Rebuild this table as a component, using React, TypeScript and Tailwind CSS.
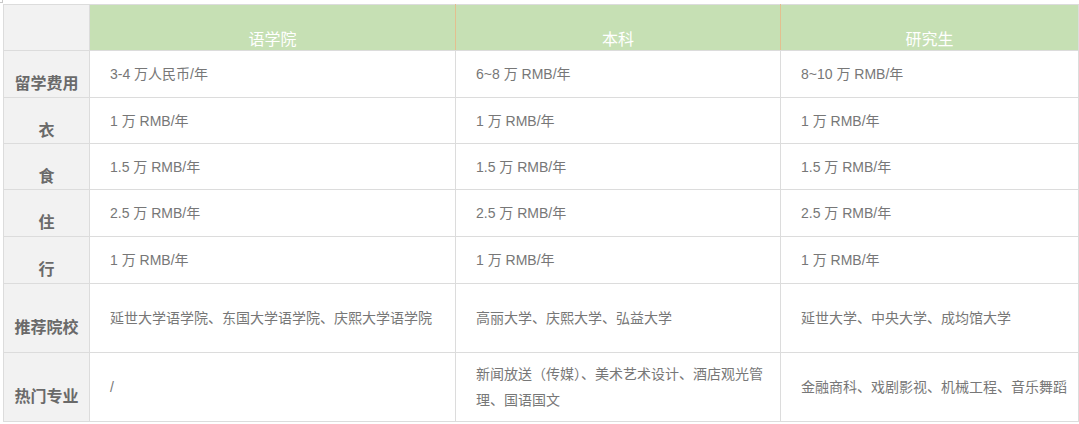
import React from 'react';

const font = { fontFamily: '"Liberation Sans", "Noto Sans CJK SC", sans-serif' };

interface Row {
  label: string;
  height: string;
  cells: React.ReactNode[];
}

const rows: Row[] = [
  { label: '留学费用', height: 'h-[47px]', cells: ['3-4 万人民币/年', '6~8 万 RMB/年', '8~10 万 RMB/年'] },
  { label: '衣', height: 'h-[46px]', cells: ['1 万 RMB/年', '1 万 RMB/年', '1 万 RMB/年'] },
  { label: '食', height: 'h-[46px]', cells: ['1.5 万 RMB/年', '1.5 万 RMB/年', '1.5 万 RMB/年'] },
  { label: '住', height: 'h-[47px]', cells: ['2.5 万 RMB/年', '2.5 万 RMB/年', '2.5 万 RMB/年'] },
  { label: '行', height: 'h-[47px]', cells: ['1 万 RMB/年', '1 万 RMB/年', '1 万 RMB/年'] },
  {
    label: '推荐院校',
    height: 'h-[69px]',
    cells: ['延世大学语学院、东国大学语学院、庆熙大学语学院', '高丽大学、庆熙大学、弘益大学', '延世大学、中央大学、成均馆大学'],
  },
  {
    label: '热门专业',
    height: 'h-[69px]',
    cells: [
      '/',
      <>
        新闻放送（传媒）、美术艺术设计、酒店观光管
        <br />
        理、国语国文
      </>,
      '金融商科、戏剧影视、机械工程、音乐舞蹈',
    ],
  },
];

const headers = ['语学院', '本科', '研究生'];

export default function App() {
  return (
    <div className="relative w-[1079px] h-[424px] bg-white overflow-hidden" style={font}>
      {/* stray corner mark */}
      <div className="absolute left-0 top-0 h-[3px] w-[3px] border-r border-b border-[#c8c8c8]" />

      <div className="pl-[3px] pt-[4px]">
        <table className="table-fixed border-collapse w-[1075px]">
          <colgroup>
            <col className="w-[86px]" />
            <col className="w-[366px]" />
            <col className="w-[325px]" />
            <col className="w-[298px]" />
          </colgroup>
          <thead>
            <tr className="h-[46px]">
              <th className="bg-[#f2f2f2] border border-[#dcdcdc]" />
              {headers.map((h, i) => (
                <th
                  key={h}
                  className={
                    'bg-[#c6e0b4] align-bottom text-center text-[16px] leading-[20px] font-normal text-white border-y border-[#dcdcdc] ' +
                    (i < 2 ? 'border-r border-r-[#e3bf8f]' : 'border-r border-r-[#dcdcdc]')
                  }
                >
                  {h}
                </th>
              ))}
            </tr>
          </thead>
          <tbody>
            {rows.map((r) => (
              <tr key={r.label} className={r.height}>
                <td className="bg-[#f2f2f2] border border-[#dcdcdc] text-center align-middle pt-[20px] text-[16px] leading-[20px] font-bold text-[#6a6a6a]">
                  {r.label}
                </td>
                {r.cells.map((c, i) => (
                  <td
                    key={i}
                    className="border border-[#dcdcdc] align-middle pl-[20px] pr-[4px] text-[14px] leading-[26px] text-[#777777]"
                  >
                    {c}
                  </td>
                ))}
              </tr>
            ))}
          </tbody>
        </table>
      </div>
    </div>
  );
}
